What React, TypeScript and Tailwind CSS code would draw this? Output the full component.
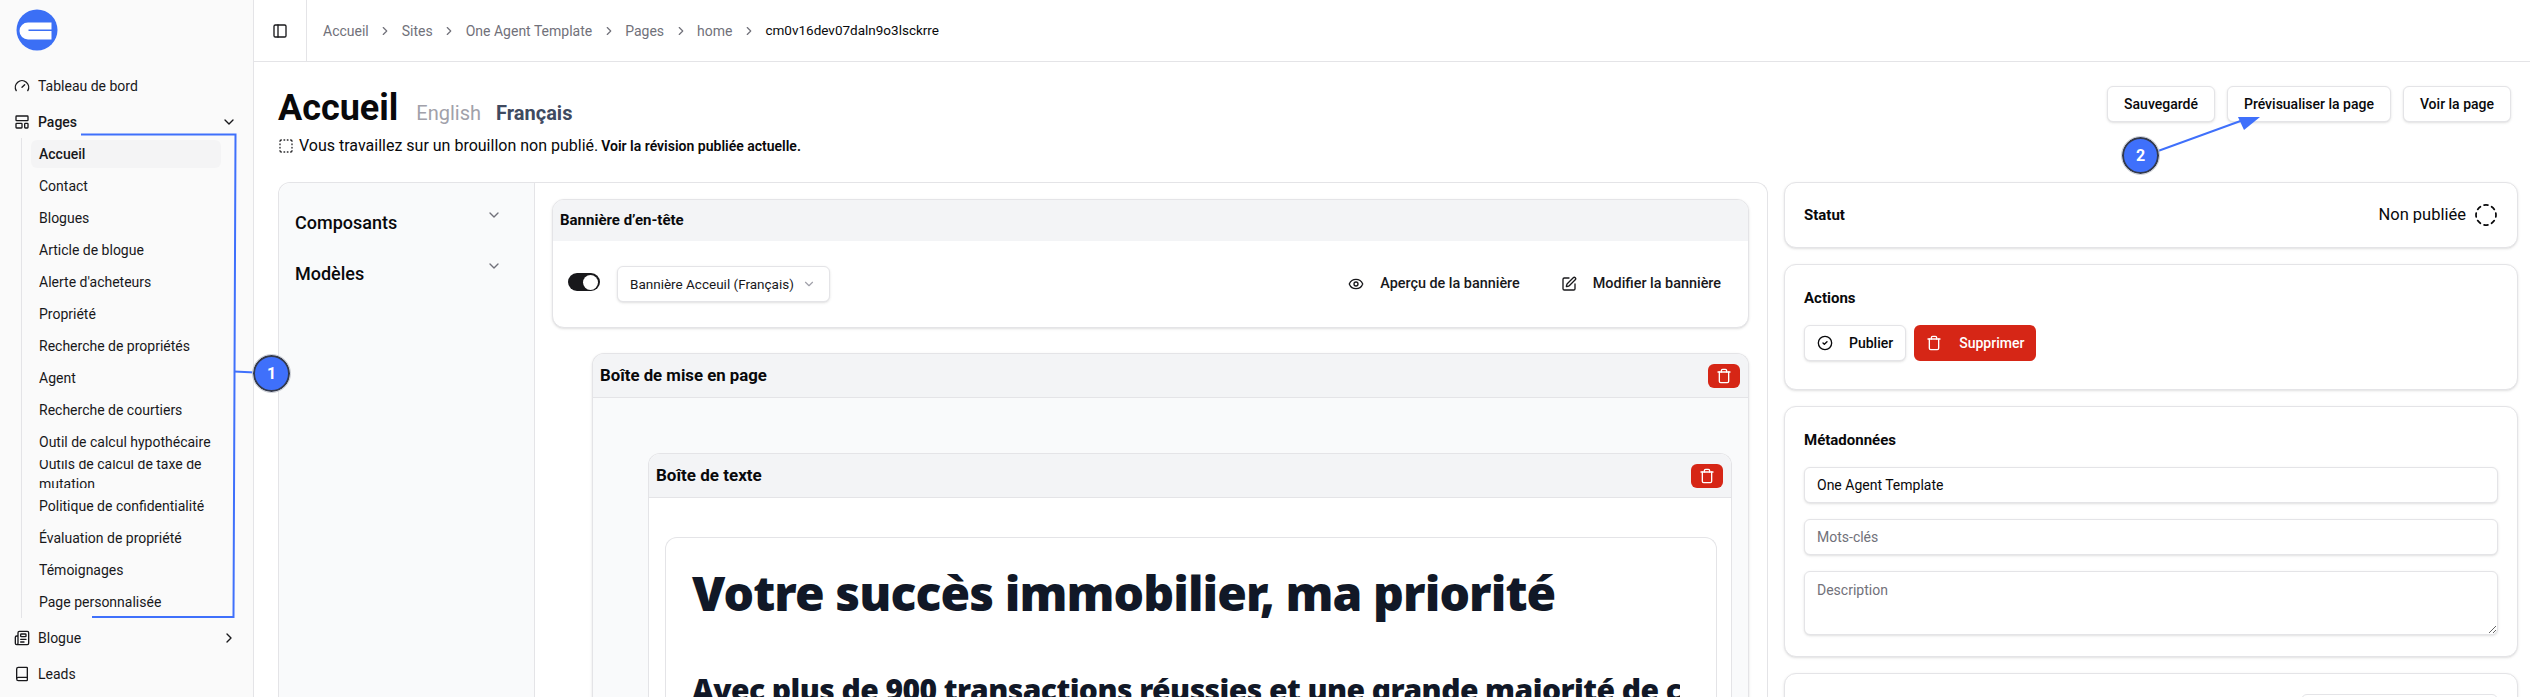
import { ReactNode } from 'react';
import {
    Book,
    ChevronDown,
    ChevronRight,
    CircleCheck,
    CircleDashed,
    Eye,
    Gauge,
    LayoutTemplate,
    Newspaper,
    PanelLeft,
    SquareDashed,
    SquarePen,
    Trash,
} from 'lucide-react';

const PAGES = [
    'Accueil',
    'Contact',
    'Blogues',
    'Article de blogue',
    "Alerte d'acheteurs",
    'Propriété',
    'Recherche de propriétés',
    'Agent',
    'Recherche de courtiers',
    'Outil de calcul hypothécaire',
    'Outils de calcul de taxe de mutation',
    'Politique de confidentialité',
    'Évaluation de propriété',
    'Témoignages',
    'Page personnalisée',
];

const CRUMBS = ['Accueil', 'Sites', 'One Agent Template', 'Pages', 'home'];

function Logo() {
    return (
        <svg width="42" height="42" viewBox="0 0 42 42" aria-hidden="true">
            <circle cx="21" cy="21" r="20.5" fill="#3b6ff5" />
            <path d="M12 13.5h23.5v7H12.5v1.6h23v8.4H12a8.5 8.5 0 0 1 0-17z" fill="#fff" />
        </svg>
    );
}

function NavItem({ icon, label, active, chevron }: { icon: ReactNode; label: string; active?: boolean; chevron?: ReactNode }) {
    return (
        <div className="flex h-8 items-center pl-[14px] pr-[16px] text-sm text-[#18181b]">
            <span className="mr-2 shrink-0">{icon}</span>
            <span className={active ? 'font-medium' : ''}>{label}</span>
            <span className="ml-auto">{chevron}</span>
        </div>
    );
}

function Sidebar() {
    return (
        <aside className="w-[254px] shrink-0 border-r border-[#e4e4e7] bg-[#fafafa]">
            <div className="h-[70px] pl-[16px] pt-[9px]">
                <Logo />
            </div>
            <div className="flex flex-col gap-1">
                <NavItem icon={<Gauge size={16} />} label="Tableau de bord" />
                <div>
                    <NavItem
                        icon={<LayoutTemplate size={16} />}
                        label="Pages"
                        active
                        chevron={<ChevronDown size={16} />}
                    />
                    <div className="ml-[21px] mr-[32px] flex flex-col gap-1 border-l border-[#e4e4e7] pl-[9px] py-0.5">
                        {PAGES.map((page, i) => (
                            <div
                                key={page}
                                className={`flex h-7 items-center overflow-hidden rounded-md px-2 text-sm text-[#18181b] ${
                                    i === 0 ? 'bg-[#f4f4f5] font-medium' : ''
                                }`}
                            >
                                <span>{page}</span>
                            </div>
                        ))}
                    </div>
                </div>
                <NavItem icon={<Newspaper size={16} />} label="Blogue" chevron={<ChevronRight size={16} />} />
                <NavItem icon={<Book size={16} />} label="Leads" />
            </div>
        </aside>
    );
}

function TopBar() {
    return (
        <header className="flex h-[62px] shrink-0 items-center border-b border-[#e4e4e7]">
            <div className="flex h-full w-[53px] items-center justify-center border-r border-[#e4e4e7]">
                <PanelLeft size={16} className="text-[#18181b]" />
            </div>
            <nav className="ml-4 flex items-center gap-[9.5px] text-sm text-[#71717a]">
                {CRUMBS.map((crumb) => (
                    <span key={crumb} className="flex items-center gap-[9.5px]">
                        {crumb}
                        <ChevronRight size={14} />
                    </span>
                ))}
                <span className="text-[13.5px] text-[#09090b]">cm0v16dev07daln9o3lsckrre</span>
            </nav>
        </header>
    );
}

function OutlineButton({ children }: { children: ReactNode }) {
    return (
        <button className="flex h-9 items-center rounded-md border border-[#e4e4e7] bg-white px-4 text-sm font-medium text-[#09090b] shadow-sm">
            {children}
        </button>
    );
}

function DeleteButton() {
    return (
        <button className="flex h-6 w-8 items-center justify-center rounded-md bg-[#d62616] text-white">
            <Trash size={16} />
        </button>
    );
}

function Card({ className, children }: { className?: string; children: ReactNode }) {
    return <section className={`rounded-xl border border-[#e4e4e7] bg-white shadow-sm ${className}`}>{children}</section>;
}

function Builder() {
    return (
        <div className="flex h-[520px] w-[1490px] shrink-0 rounded-t-xl border border-b-0 border-[#e4e4e7] bg-white">
            <div className="w-[256px] shrink-0 rounded-tl-xl border-r border-[#e4e4e7] bg-[#f9fafb] pl-4 pr-[32px] pt-[26px] text-lg font-medium text-[#09090b]">
                <div className="flex h-6 justify-between">
                    Composants
                    <ChevronDown size={16} className="mt-[-2px] text-[#71717a]" />
                </div>
                <div className="mt-[27px] flex h-6 justify-between">
                    Modèles
                    <ChevronDown size={16} className="mt-[-2px] text-[#71717a]" />
                </div>
            </div>

            <div className="min-w-0 flex-1 pl-[17px] pr-[18px] pt-[16px]">
                <div className="overflow-hidden rounded-xl border border-[#e4e4e7] bg-white shadow-sm">
                    <div className="flex h-[41px] items-center bg-[#f3f4f6] px-[7px] text-[15px] font-bold text-[#09090b]">
                        Bannière d’en-tête
                    </div>
                    <div className="flex h-[86px] items-start pl-[15px] pr-[27px] pt-[25px]">
                        <div className="mt-[7px] flex h-[18px] w-8 items-center justify-end rounded-full bg-[#18181b] pr-[2px]">
                            <div className="size-[15px] rounded-full bg-white" />
                        </div>
                        <div className="ml-[17px] flex h-9 w-[213px] items-center gap-2 rounded-md border border-[#e4e4e7] bg-white pl-3 text-[13.5px] text-[#18181b] shadow-sm">
                            Bannière Acceuil (Français)
                            <ChevronDown size={14} className="text-[#a1a1aa]" />
                        </div>
                        <div className="ml-auto flex h-9 items-center gap-2 text-[14.4px] font-medium text-[#18181b]">
                            <Eye size={16} />
                            <span className="ml-2">Aperçu de la bannière</span>
                            <SquarePen size={16} className="ml-[33px]" />
                            <span className="ml-2">Modifier la bannière</span>
                        </div>
                    </div>
                </div>

                <div className="ml-10 mt-[25px] overflow-hidden rounded-t-xl border border-b-0 border-[#e4e4e7] bg-[#f9fafb] shadow-sm">
                    <div className="flex h-[44px] items-center justify-between border-b border-[#e4e4e7] bg-[#f3f4f6] pl-[7px] pr-2 text-[16.8px] font-bold text-[#09090b]">
                        Boîte de mise en page
                        <DeleteButton />
                    </div>
                    <div className="ml-[55px] mr-4 mt-[55px] overflow-hidden rounded-t-xl border border-b-0 border-[#e4e4e7] bg-white">
                        <div className="flex h-[44px] items-center justify-between border-b border-[#e4e4e7] bg-[#f3f4f6] pl-[7px] pr-2 text-[17px] font-bold text-[#09090b]">
                            Boîte de texte
                            <DeleteButton />
                        </div>
                        <div className="ml-[16px] mr-[14px] mt-[39px] rounded-t-xl border border-b-0 border-[#e4e4e7] pl-[26px] pr-[36px] pt-[31px] font-['Noto_Sans',sans-serif] text-[#111827]">
                            <h1 className="text-5xl font-black leading-[48px] tracking-[-0.9px]">Votre succès immobilier, ma priorité</h1>
                            <h2 className="mt-[55px] overflow-hidden whitespace-nowrap text-3xl font-black tracking-[-0.55px]">
                                Avec plus de 900 transactions réussies et une grande majorité de clients satisfaits
                            </h2>
                        </div>
                    </div>
                </div>
            </div>
        </div>
    );
}

function RightColumn() {
    const field = 'rounded-md border border-[#e4e4e7] bg-white px-3 text-sm shadow-sm';
    return (
        <div className="flex w-[734px] shrink-0 flex-col gap-4">
            <Card className="flex h-[66px] items-center justify-between px-[19px]">
                <span className="text-[15px] font-bold text-[#09090b]">Statut</span>
                <span className="flex items-center gap-2 text-[16.5px] text-[#09090b]">
                    Non publiée
                    <CircleDashed size={24} strokeWidth={1.75} />
                </span>
            </Card>
            <Card className="h-[126px] px-[19px] pt-[22px]">
                <h3 className="mb-[15.5px] text-[15px] font-bold text-[#09090b]">Actions</h3>
                <div className="flex gap-2">
                    <button className="flex h-9 items-center gap-4 rounded-md border border-[#e4e4e7] bg-white px-3 text-sm font-medium text-[#09090b] shadow-sm">
                        <CircleCheck size={16} />
                        Publier
                    </button>
                    <button className="flex h-9 items-center gap-[17px] rounded-md bg-[#d62616] px-3 text-sm font-medium text-white">
                        <Trash size={16} />
                        Supprimer
                    </button>
                </div>
            </Card>
            <Card className="h-[251px] px-[19px] pt-[22px]">
                <h3 className="mb-[15.5px] text-[15px] font-bold text-[#09090b]">Métadonnées</h3>
                <div className="flex flex-col gap-4">
                    <input readOnly value="One Agent Template" className={`h-9 w-full text-[#09090b] ${field}`} />
                    <input readOnly placeholder="Mots-clés" className={`h-9 w-full placeholder:text-[#71717a] ${field}`} />
                    <textarea
                        readOnly
                        placeholder="Description"
                        className={`block h-16 w-full py-2 placeholder:text-[#71717a] ${field}`}
                    />
                </div>
            </Card>
            <Card className="h-[60px] px-5 pt-5">
                <div className="ml-[496px] h-9 w-[197px] rounded-md border border-[#e4e4e7] bg-white" />
            </Card>
        </div>
    );
}

// annotation arrows and numbered markers on top of the page
function Annotations() {
    return (
        <div className="pointer-events-none absolute inset-0">
            <svg className="absolute inset-0" width="2530" height="697" fill="none" aria-hidden="true">
                <path d="M81 134.5H235.5L233.5 617H92" stroke="#3f70fb" strokeWidth="2" />
                <path d="M234 371.5L255 372.5" stroke="#3f70fb" strokeWidth="2" />
                <path d="M2158 151L2246 119" stroke="#3f70fb" strokeWidth="2" />
                <path d="M2260 117L2238 117L2244 130Z" fill="#3f70fb" />
            </svg>
            <div className="absolute left-[253px] top-[355px] flex size-[37px] items-center justify-center rounded-full border-2 border-[#333a4d] bg-[#3f70fb] text-base font-bold text-white outline outline-1 outline-[#c9ccd4]">
                1
            </div>
            <div className="absolute left-[2122px] top-[137px] flex size-[37px] items-center justify-center rounded-full border-2 border-[#333a4d] bg-[#3f70fb] text-base font-bold text-white outline outline-1 outline-[#c9ccd4]">
                2
            </div>
        </div>
    );
}

export default function App() {
    return (
        <div className="relative flex h-[697px] w-[2530px] overflow-hidden bg-white font-['Roboto',sans-serif]">
            <Sidebar />
            <main className="flex min-w-0 flex-1 flex-col">
                <TopBar />
                <div className="flex items-start justify-between pl-6 pr-[19px] pt-[26px]">
                    <div>
                        <div className="flex items-baseline">
                            <span className="text-4xl font-bold text-[#09090b]">Accueil</span>
                            <span className="ml-[18px] text-xl font-normal text-[#a1a1aa]">English</span>
                            <span className="ml-[15px] text-xl font-bold text-[#3f4a5f]">Français</span>
                        </div>
                        <p className="mt-[6px] flex items-center text-base text-[#09090b]">
                            <SquareDashed size={16} className="mr-[5px] text-[#27272a]" />
                            Vous travaillez sur un brouillon non publié.
                            <span className="ml-[3px] text-sm font-semibold">Voir la révision publiée actuelle.</span>
                        </p>
                    </div>
                    <div className="mt-[-2px] flex gap-3">
                        <OutlineButton>Sauvegardé</OutlineButton>
                        <OutlineButton>Prévisualiser la page</OutlineButton>
                        <OutlineButton>Voir la page</OutlineButton>
                    </div>
                </div>
                <div className="mt-[24px] flex gap-4 pl-6">
                    <Builder />
                    <RightColumn />
                </div>
            </main>
            <Annotations />
        </div>
    );
}
